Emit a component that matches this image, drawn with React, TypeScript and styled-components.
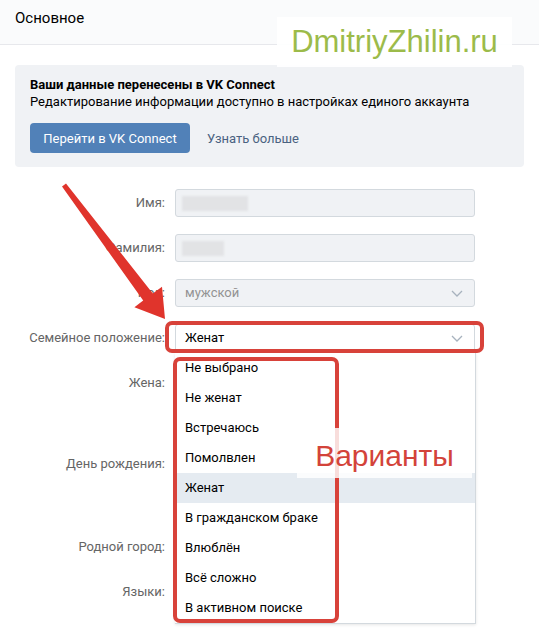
import React from "react";
import styled, { createGlobalStyle } from "styled-components";

const Global = createGlobalStyle`
  html, body { margin: 0; padding: 0; background: #fff; }
  body { font-family: Roboto, "Open Sans", "Liberation Sans", sans-serif; -webkit-font-smoothing: antialiased; }
`;

const Page = styled.div`
  position: relative;
  width: 539px;
  height: 629px;
  overflow: hidden;
  background: #fff;
`;

const Header = styled.div`
  height: 45px;
  box-sizing: border-box;
  padding: 9px 15px 0;
  background: #fafbfc;
  border-bottom: 1px solid #e7e8ec;
  font-size: 15px;
  line-height: 18px;
  color: #000;
`;

const InfoBox = styled.div`
  margin: 20px 15px 0;
  padding: 11px 15px 14px;
  background: #f0f2f5;
  border-radius: 4px;
  font-size: 13px;
  line-height: 17px;
  color: #000;
`;

const InfoTitle = styled.div`
  font-weight: 700;
`;

const Actions = styled.div`
  display: flex;
  align-items: center;
  gap: 17px;
  margin-top: 13px;
`;

const PrimaryButton = styled.button`
  width: 160px;
  height: 30px;
  border: 0;
  border-radius: 4px;
  background: #5181b8;
  color: #fff;
  font-family: inherit;
  font-size: 13px;
  padding: 0;
`;

const LinkButton = styled.span`
  color: #4a6281;
  font-size: 13px;
`;

const Form = styled.div`
  display: flex;
  flex-direction: column;
  gap: 17px;
  padding-top: 22px;
`;

const Row = styled.div<{ $h?: number }>`
  display: grid;
  grid-template-columns: 165px 300px;
  column-gap: 10px;
  height: ${(p) => p.$h ?? 28}px;
`;

const Label = styled.div`
  text-align: right;
  line-height: 28px;
  font-size: 13px;
  color: #656565;
  white-space: nowrap;
`;

const Field = styled.div<{ $disabled?: boolean }>`
  position: relative;
  height: 28px;
  box-sizing: border-box;
  border: 1px solid #d3d9de;
  border-radius: 3px;
  background: ${(p) => (p.$disabled ? "#f0f2f5" : "#fff")};
  color: ${(p) => (p.$disabled ? "#939393" : "#000")};
  font-size: 13px;
  line-height: 26px;
  padding: 0 9px;
  display: flex;
  align-items: center;
  justify-content: space-between;
`;

const Blur = styled.span<{ $w: number }>`
  display: block;
  width: ${(p) => p.$w}px;
  height: 15px;
  margin-left: -3px;
  background: #e2e3e5;
  filter: blur(1px);
`;

const Chevron = () => (
  <svg width="12" height="7" viewBox="0 0 12 7" style={{ marginRight: 2 }}>
    <path d="M1 1l5 5 5-5" fill="none" stroke="#a7b2be" strokeWidth="1.3" />
  </svg>
);

const Menu = styled.div`
  position: absolute;
  top: 28px;
  left: -1px;
  width: 300px;
  background: #fff;
  border-right: 1px solid #d3d9de;
  border-bottom: 1px solid #d3d9de;
  box-shadow: 0 1px 3px rgba(0, 0, 0, 0.1);
  z-index: 2;
`;

const Option = styled.div<{ $active?: boolean }>`
  height: 30px;
  line-height: 30px;
  padding-left: 10px;
  font-size: 13px;
  color: #000;
  background: ${(p) => (p.$active ? "#e5ebf1" : "#fff")};
`;

const Watermark = styled.div`
  position: absolute;
  left: 277px;
  top: 17px;
  width: 235px;
  height: 50px;
  background: rgba(255, 255, 255, 0.92);
  display: flex;
  align-items: center;
  justify-content: center;
  font-family: "Liberation Sans", Arial, sans-serif;
  font-size: 31px;
  color: #9cbb4a;
  z-index: 5;
`;

const RedFrame = styled.div<{ $x: number; $y: number; $w: number; $h: number }>`
  position: absolute;
  left: ${(p) => p.$x}px;
  top: ${(p) => p.$y}px;
  width: ${(p) => p.$w}px;
  height: ${(p) => p.$h}px;
  box-sizing: border-box;
  border: 4px solid #d8423a;
  border-radius: 7px;
  z-index: 6;
`;

const Caption = styled.div`
  position: absolute;
  left: 297px;
  top: 428px;
  width: 175px;
  height: 50px;
  background: rgba(255, 255, 255, 0.82);
  display: flex;
  align-items: center;
  justify-content: center;
  padding: 5px 0 0 0;
  box-sizing: border-box;
  font-family: "Liberation Sans", Arial, sans-serif;
  font-size: 30px;
  color: #d3433a;
  z-index: 7;
`;

const Overlay = styled.svg`
  position: absolute;
  left: 0;
  top: 0;
  z-index: 8;
  pointer-events: none;
`;

const options = [
  "Не выбрано",
  "Не женат",
  "Встречаюсь",
  "Помолвлен",
  "Женат",
  "В гражданском браке",
  "Влюблён",
  "Всё сложно",
  "В активном поиске",
];

export default function App() {
  return (
    <Page>
      <Global />
      <Header>Основное</Header>
      <InfoBox>
        <InfoTitle>Ваши данные перенесены в VK Connect</InfoTitle>
        <div>Редактирование информации доступно в настройках единого аккаунта</div>
        <Actions>
          <PrimaryButton>Перейти в VK Connect</PrimaryButton>
          <LinkButton>Узнать больше</LinkButton>
        </Actions>
      </InfoBox>
      <Form>
        <Row>
          <Label>Имя:</Label>
          <Field $disabled>
            <Blur $w={66} />
          </Field>
        </Row>
        <Row>
          <Label>Фамилия:</Label>
          <Field $disabled>
            <Blur $w={42} />
          </Field>
        </Row>
        <Row>
          <Label>Пол:</Label>
          <Field $disabled>
            мужской
            <Chevron />
          </Field>
        </Row>
        <Row>
          <Label>Семейное положение:</Label>
          <Field>
            Женат
            <Chevron />
            <Menu>
              {options.map((o) => (
                <Option key={o} $active={o === "Женат"}>
                  {o}
                </Option>
              ))}
            </Menu>
          </Field>
        </Row>
        <Row $h={64}>
          <Label>Жена:</Label>
        </Row>
        <Row $h={66}>
          <Label>День рождения:</Label>
        </Row>
        <Row>
          <Label>Родной город:</Label>
        </Row>
        <Row>
          <Label>Языки:</Label>
        </Row>
      </Form>
      <Watermark>DmitriyZhilin.ru</Watermark>
      <RedFrame $x={165} $y={321} $w={319} $h={32} />
      <RedFrame $x={173} $y={357} $w={166} $h={266} />
      <Caption>Варианты</Caption>
      <Overlay width="539" height="629" viewBox="0 0 539 629">
        <polygon
          points="66,183.5 152.8,293.4 162,286.8 165,319 134.4,307.2 143.2,300.6 62,186.5"
          fill="#e0342c"
        />
      </Overlay>
    </Page>
  );
}
